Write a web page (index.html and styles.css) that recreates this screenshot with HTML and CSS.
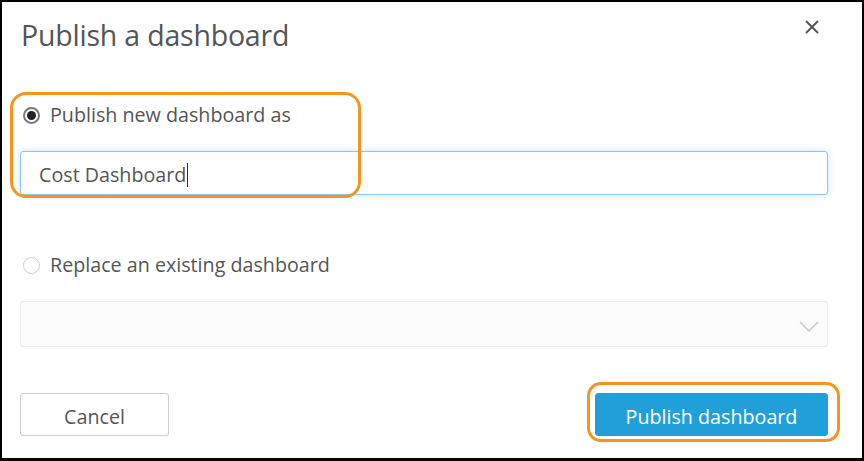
FILE: index.html
```html
<!DOCTYPE html>
<html>
<head>
<meta charset="utf-8">
<link rel="stylesheet" href="styles.css">
</head>
<body>
<div class="frame">
  <div class="header">
    <h1 class="title">Publish a dashboard</h1>
    <button class="close" aria-label="Close">
      <svg width="14" height="14" viewBox="0 0 14 14"><path d="M1 1L13 13M13 1L1 13" stroke="#555" stroke-width="2" stroke-linecap="butt"/></svg>
    </button>
  </div>
  <label class="radio-row first">
    <span class="radio checked"></span>
    <span class="label">Publish new dashboard as</span>
  </label>
  <div class="input"><span class="value">Cost Dashboard</span><span class="caret"></span></div>
  <label class="radio-row second">
    <span class="radio"></span>
    <span class="label">Replace an existing dashboard</span>
  </label>
  <div class="select">
    <svg class="chevron" width="20" height="11" viewBox="0 0 20 11"><path d="M1 1L10 10L19 1" fill="none" stroke="#c4c4c4" stroke-width="1.4"/></svg>
  </div>
  <div class="footer">
    <button class="btn cancel">Cancel</button>
    <button class="btn primary">Publish dashboard</button>
  </div>
  <div class="highlight hl-one"></div>
  <div class="highlight hl-two"></div>
</div>
</body>
</html>
```
FILE: styles.css
```css
* { box-sizing: border-box; }
html, body { margin: 0; padding: 0; background: #fff; }
body { font-family: "Open Sans", "Noto Sans", sans-serif; color: #555; }
.frame {
  position: relative;
  width: 864px;
  height: 461px;
  border-style: solid;
  border-color: #000;
  border-width: 2px 2px 3px 2px;
  padding: 0 34px 0 18px;
  display: flex;
  flex-direction: column;
  background: #fff;
}
.header {
  height: 68px;
  display: flex;
  justify-content: space-between;
  align-items: flex-start;
}
.title {
  margin: 14px 0 0 1px;
  font-size: 28.5px;
  font-weight: 400;
  line-height: 38px;
  color: #555;
  letter-spacing: -0.2px;
}
.close {
  margin: 18px 9px 0 0;
  padding: 0;
  border: 0;
  background: none;
  width: 14px;
  height: 14px;
  display: flex;
}
.radio-row {
  display: flex;
  align-items: center;
  height: 24px;
  margin-left: 3px;
  gap: 10px;
}
.radio-row.first { margin-top: 33px; }
.radio-row.second { margin-top: 58px; }
.radio {
  width: 17px;
  height: 17px;
  border-radius: 50%;
  border: 1px solid #ccc;
  background: #fff;
  display: flex;
  align-items: center;
  justify-content: center;
}
.radio.checked { border: 2px solid #777; }
.radio.checked::after {
  content: "";
  width: 9px;
  height: 9px;
  border-radius: 50%;
  background: #222;
}
.label { font-size: 19.7px; color: #555; line-height: 24px; }
.input {
  margin-top: 24px;
  height: 44px;
  border: 1px solid #8dc5e8;
  border-radius: 3px;
  box-shadow: 0 0 7px rgba(102, 175, 233, 0.35);
  display: flex;
  align-items: center;
  padding: 3px 0 0 18px;
  font-size: 19.7px;
  color: #555;
}
.caret {
  width: 1px;
  height: 24px;
  background: #333;
  margin-left: 1px;
}
.select {
  margin-top: 24px;
  height: 46px;
  border: 1px solid #ececec;
  border-radius: 3px;
  background: #fcfcfc;
  display: flex;
  align-items: center;
  justify-content: flex-end;
  padding-right: 8px;
}
.chevron { margin-top: 4px; }
.footer {
  margin-top: 46px;
  display: flex;
  justify-content: space-between;
}
.btn {
  height: 43px;
  font-family: "Open Sans", "Noto Sans", sans-serif;
  font-size: 19.7px;
  border-radius: 3px;
  padding: 3px 0 0 0;
}
.cancel {
  width: 149px;
  background: #fff;
  border: 1px solid #ccc;
  color: #555;
}
.primary {
  width: 233px;
  background: #219fd8;
  border: 1px solid #219fd8;
  color: #fff;
}
.highlight {
  position: absolute;
  border: 3px solid #f7941d;
  pointer-events: none;
}
.hl-one { left: 8px; top: 90px; width: 351px; height: 106px; border-radius: 16px; }
.hl-two { left: 585px; top: 380px; width: 253px; height: 60px; border-radius: 14px; }
```
